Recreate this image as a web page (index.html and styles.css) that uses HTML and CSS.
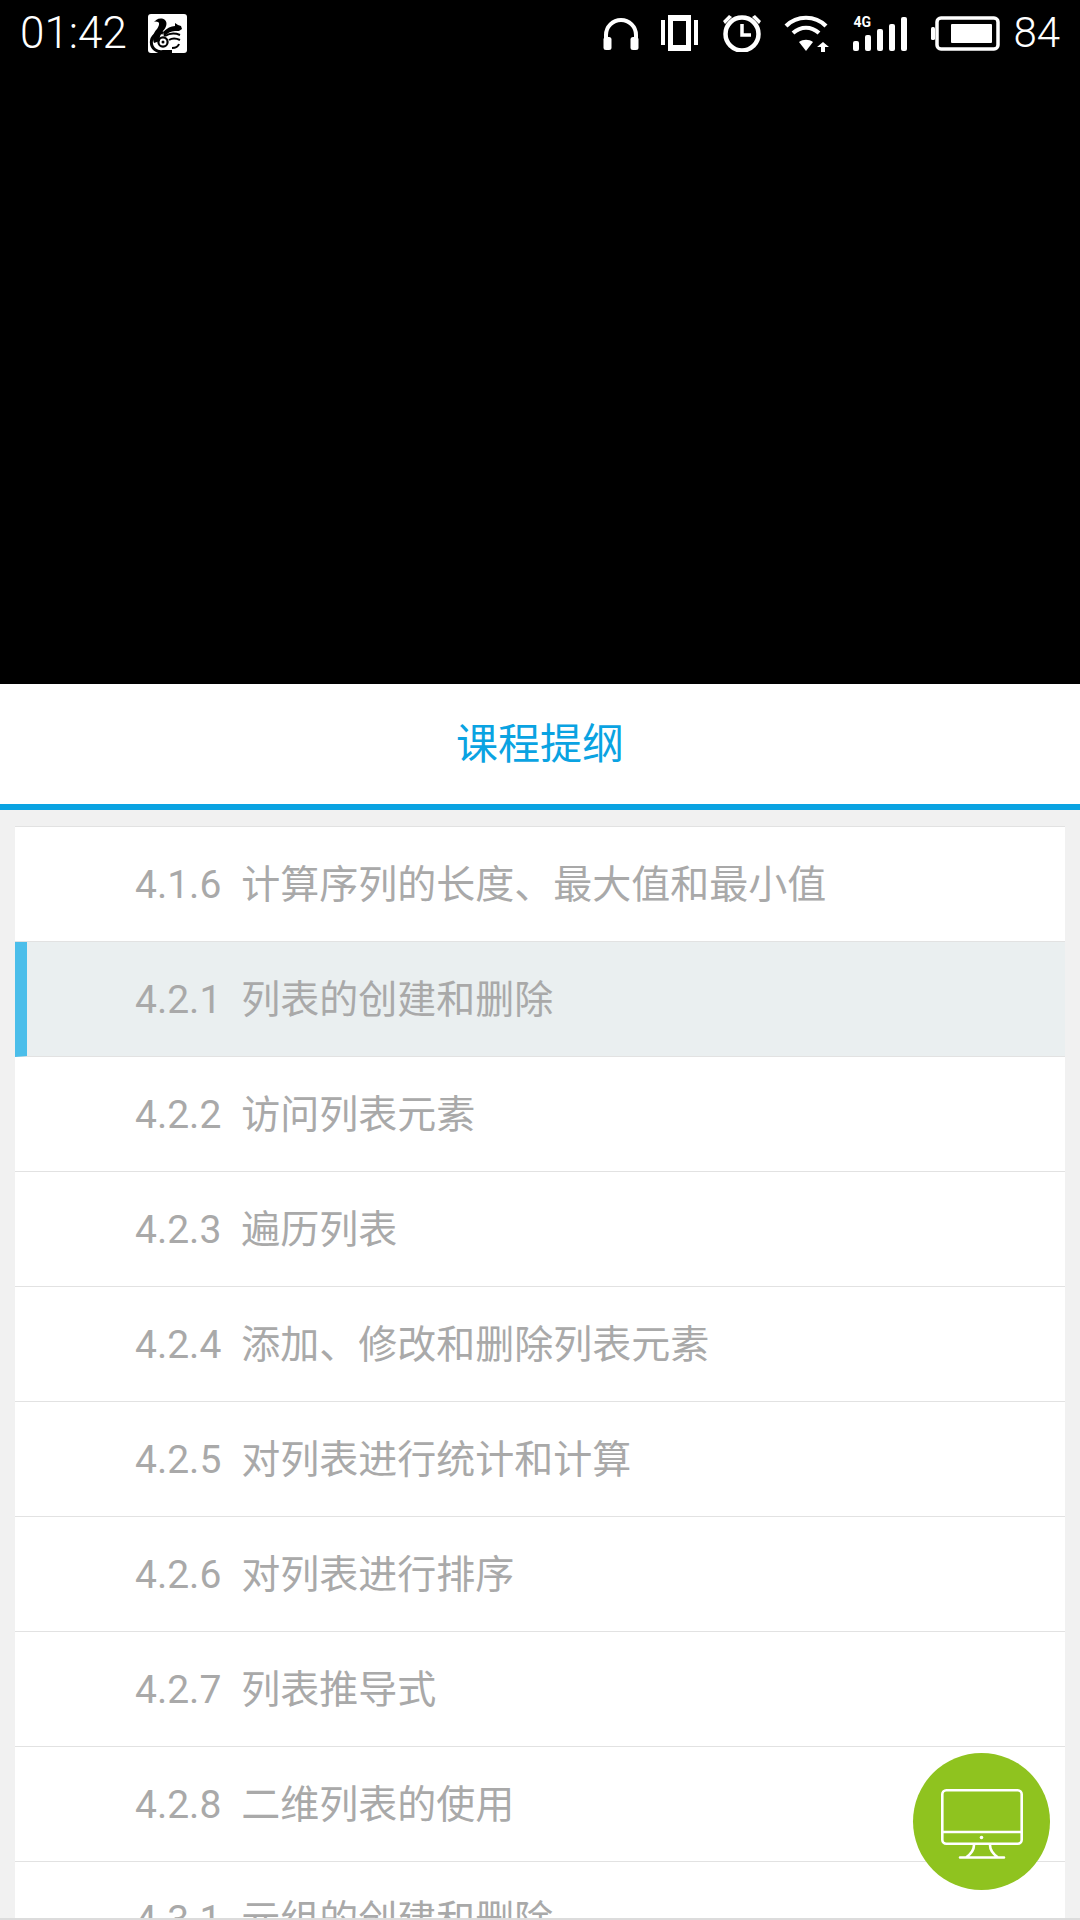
FILE: index.html
```html
<!DOCTYPE html>
<html lang="zh">
<head>
<meta charset="utf-8">
<title>课程提纲</title>
<link rel="stylesheet" href="styles.css">
</head>
<body>
<div class="page">
  <header class="video">
    <div class="status">
      <div class="status-left">
        <span class="time">01:42</span>
        <svg class="uc" viewBox="0 0 39 39">
          <rect width="39" height="39" rx="3" fill="#fff"/>
          <path fill="#000" d="M5 10C7 5 13 3 17 6c3 3 1 8-2 11-3 4-4 7-3 10l-6 2c-2-5-1-10 3-14 2-3 3-6 1-7-2-1-4-1-5 2z"/>
          <path fill="#000" d="M15 18C19 14 23 12 27 12l0-3 3 2 3 1 1 3-3 2-4 0C23 17 19 19 16 23z"/>
          <path fill="none" stroke="#000" stroke-width="3" d="M15 19A9.500 9.500 0 1 0 15 37.500H24"/>
          <path fill="none" stroke="#000" stroke-width="2" d="M17 22C22 19 27 19 32 21M21 26C24 24 28 24 32 26M24 34C27 34 30 33 31 30"/>
          <circle cx="15" cy="28" r="4.600" fill="none" stroke="#000" stroke-width="2.200"/>
          <circle cx="15" cy="28" r="1.500" fill="#000"/>
        </svg>
      </div>
      <div class="status-right">
        <svg class="ic headphones" viewBox="0 0 36 33">
          <path fill="none" stroke="#fff" stroke-width="4" d="M3 24V18a15 15 0 0 1 30 0v6"/>
          <rect x="0.500" y="20" width="8" height="13" rx="2.500" fill="#fff"/>
          <rect x="27.500" y="20" width="8" height="13" rx="2.500" fill="#fff"/>
        </svg>
        <svg class="ic vibrate" viewBox="0 0 37 36">
          <rect x="0" y="5" width="4" height="25" fill="#fff"/>
          <rect x="33" y="5" width="4" height="25" fill="#fff"/>
          <path fill="#fff" fill-rule="evenodd" d="M7 0h23v36H7zM12 6v24h13V6z"/>
        </svg>
        <svg class="ic alarm" viewBox="0 0 40 38">
          <circle cx="20" cy="20" r="16.500" fill="none" stroke="#fff" stroke-width="4.500"/>
          <path fill="none" stroke="#fff" stroke-width="3.500" d="M20 10v11h9"/>
          <path fill="#fff" d="M1 7 7 1l3 2-7 7zM39 7 33 1l-3 2 7 7z"/>
        </svg>
        <svg class="ic wifi" viewBox="0 0 46 37">
          <path fill="none" stroke="#fff" stroke-width="4.200" d="M2 11C13 0 31 0 42 11"/>
          <path fill="none" stroke="#fff" stroke-width="4.200" d="M9 18c8-7 18-7 26 0"/>
          <path fill="#fff" d="M15 27 22 36 29 27c-4-3-10-3-14 0z"/>
          <path fill="#fff" d="M39 27l6 5h-4v5h-4v-5h-4z"/>
        </svg>
        <div class="signal">
          <span class="net">4G</span>
          <span class="bar b1"></span>
          <span class="bar b2"></span>
          <span class="bar b3"></span>
          <span class="bar b4"></span>
          <span class="bar b5"></span>
        </div>
        <svg class="ic battery" viewBox="0 0 69 35">
          <rect x="0" y="11" width="4" height="13" rx="1.500" fill="#fff"/>
          <rect x="6" y="2" width="61" height="31" rx="4" fill="none" stroke="#fff" stroke-width="3.500"/>
          <rect x="20" y="8" width="41" height="19" rx="1" fill="#fff"/>
        </svg>
        <span class="level">84</span>
      </div>
    </div>
  </header>

  <div class="tab">课程提纲</div>

  <main class="content">
    <ul class="list">
      <li class="row"><span class="num">4.1.6</span>计算序列的长度、最大值和最小值</li>
      <li class="row active"><span class="num">4.2.1</span>列表的创建和删除</li>
      <li class="row"><span class="num">4.2.2</span>访问列表元素</li>
      <li class="row"><span class="num">4.2.3</span>遍历列表</li>
      <li class="row"><span class="num">4.2.4</span>添加、修改和删除列表元素</li>
      <li class="row"><span class="num">4.2.5</span>对列表进行统计和计算</li>
      <li class="row"><span class="num">4.2.6</span>对列表进行排序</li>
      <li class="row"><span class="num">4.2.7</span>列表推导式</li>
      <li class="row"><span class="num">4.2.8</span>二维列表的使用</li>
      <li class="row"><span class="num">4.3.1</span>元组的创建和删除</li>
    </ul>
  </main>

  <button class="fab" type="button" aria-label="电脑">
    <svg viewBox="0 0 82 70" class="fab-icon">
      <rect x="1.300" y="1.300" width="79.400" height="53.400" rx="4" fill="none" stroke="#fff" stroke-width="2.600"/>
      <path stroke="#fff" stroke-width="2.600" d="M2 43h78"/>
      <circle cx="40.500" cy="48.500" r="1.800" fill="#fff"/>
      <path fill="none" stroke="#fff" stroke-width="2.600" stroke-linecap="round" d="M33 56c0 5-3 9-8 12.500M49 56c0 5 3 9 8 12.500M19 68.500h44"/>
    </svg>
  </button>
</div>
</body>
</html>
```

FILE: styles.css
```css
* { box-sizing: border-box; }

html, body {
  margin: 0;
  padding: 0;
}

body {
  width: 1080px;
  height: 1920px;
  overflow: hidden;
  font-family: Roboto, "Noto Sans CJK SC", sans-serif;
}

.page {
  position: relative;
  display: flex;
  flex-direction: column;
  height: 1920px;
  background: #f1f1f1;
  border-bottom: 2px solid #dcdcdc;
  overflow: hidden;
}

.video {
  height: 684px;
  flex: none;
  background: #000;
}

.status {
  display: flex;
  justify-content: space-between;
  align-items: center;
  height: 66px;
  padding: 0 20px 0 20px;
  color: #fff;
}

.status-left {
  display: flex;
  align-items: center;
  gap: 21px;
}

.time {
  font-size: 44px;
  font-weight: 300;
  line-height: 66px;
}

.uc {
  width: 39px;
  height: 39px;
  display: block;
}

.status-right {
  display: flex;
  align-items: center;
}

.ic {
  display: block;
  flex: none;
}

.headphones { width: 36px; height: 33px; margin-right: 22px; }
.vibrate { width: 37px; height: 36px; margin-right: 24px; }
.alarm { width: 40px; height: 38px; margin-right: 22px; }
.wifi { width: 46px; height: 37px; margin-right: 23px; }
.battery { width: 69px; height: 35px; margin-right: 13px; }

.signal {
  position: relative;
  display: flex;
  align-items: flex-end;
  gap: 6.500px;
  width: 58px;
  height: 35px;
  margin-right: 20px;
}

.net {
  position: absolute;
  left: 0;
  top: -1px;
  font-size: 14px;
  font-weight: 700;
  line-height: 14px;
}

.bar {
  width: 5.500px;
  background: #fff;
  border-radius: 2px;
}

.b1 { height: 10px; }
.b2 { height: 16px; }
.b3 { height: 22px; }
.b4 { height: 27px; }
.b5 { height: 34px; }

.level {
  font-size: 42px;
  font-weight: 300;
  line-height: 66px;
}

.tab {
  flex: none;
  height: 126px;
  padding-top: 2px;
  background: #fff;
  border-bottom: 6px solid #0aa3e2;
  color: #0aa3e2;
  font-size: 42px;
  line-height: 118px;
  text-align: center;
}

.content {
  flex: 1;
  min-height: 0;
  padding: 16px 15px 0;
  overflow: hidden;
}

.list {
  margin: 0;
  padding: 0;
  list-style: none;
  background: #fff;
  border-top: 1px solid #e2e2e2;
}

.row {
  height: 115px;
  padding: 2px 0 0 120px;
  border-bottom: 1px solid #e2e2e2;
  color: #a9a9a9;
  font-size: 39px;
  line-height: 113px;
  white-space: nowrap;
}

.row.active {
  padding-left: 108px;
  background: #eaeff0;
  border-left: 12px solid #4bbeea;
}

.num {
  display: inline-block;
  margin-right: 20px;
}

.fab {
  position: absolute;
  left: 913px;
  top: 1753px;
  display: flex;
  align-items: center;
  justify-content: center;
  width: 137px;
  height: 137px;
  padding: 4px 0 0;
  border: 0;
  border-radius: 50%;
  background: #8fc31f;
}

.fab-icon {
  display: block;
  width: 82px;
  height: 70px;
}
```
